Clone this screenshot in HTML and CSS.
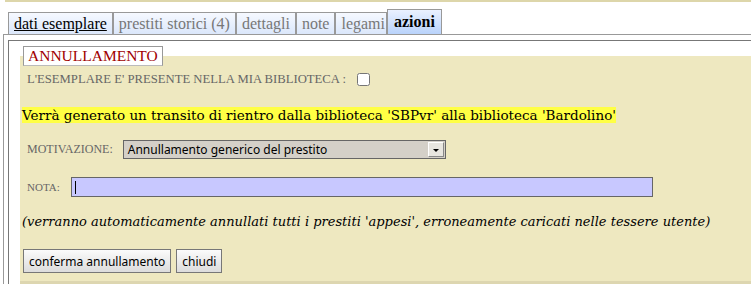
FILE: index.html
```html
<!DOCTYPE html>
<html lang="it">
<head>
  <meta charset="UTF-8">
  <title>Annullamento prestito</title>
  <link rel="stylesheet" href="styles.css">
</head>
<body>

  <div class="topband"></div>

  <ul class="tabs">
    <li class="tab first"><a href="#">dati esemplare</a></li>
    <li class="tab">prestiti storici (4)</li>
    <li class="tab">dettagli</li>
    <li class="tab">note</li>
    <li class="tab last">legami</li>
    <li class="tab active">azioni</li>
  </ul>

  <div class="panel">
    <div class="content">
      <form class="box">
        <fieldset>
          <legend>ANNULLAMENTO</legend>

          <div class="row check-row">
            <label class="lbl" for="presente">L'ESEMPLARE E' PRESENTE NELLA MIA BIBLIOTECA :</label>
            <input type="checkbox" id="presente">
          </div>

          <p class="transit"><span>Verrà generato un transito di rientro dalla biblioteca 'SBPvr' alla biblioteca 'Bardolino'</span></p>

          <div class="row motiv-row">
            <label class="lbl" for="motivazione">MOTIVAZIONE:</label>
            <div class="select">
              <span class="select-text">Annullamento generico del prestito</span>
              <span class="select-arrow"></span>
            </div>
          </div>

          <div class="row nota-row">
            <label class="lbl nota-lbl" for="nota">NOTA:</label>
            <div class="nota" id="nota"><span class="caret"></span></div>
          </div>

          <p class="hint">(verranno automaticamente annullati tutti i prestiti 'appesi', erroneamente caricati nelle tessere utente)</p>

          <div class="buttons">
            <button type="button">conferma annullamento</button>
            <button type="button">chiudi</button>
          </div>
        </fieldset>
      </form>
    </div>
  </div>

</body>
</html>
```

FILE: styles.css
```css
body {
  margin: 0;
  font-family: "DejaVu Serif", serif;
  font-size: 12px;
  color: #000;
  background-color: #ffffff;
  overflow: hidden;
}

.topband {
  height: 2px;
  margin-left: 5px;
  background-color: #ddd6aa;
}

.tabs {
  display: flex;
  align-items: flex-end;
  list-style: none;
  margin: 0;
  padding: 0 0 0 8px;
  height: 32px;
}

.tab {
  height: 21px;
  line-height: 22px;
  padding: 0 5px;
  border: 1px solid #999;
  border-bottom: none;
  background: linear-gradient(#f6f9ff, #dbe7fb);
  color: #777;
  font-family: "Liberation Serif", serif;
  font-size: 16px;
  white-space: nowrap;
}

.tab a {
  color: #000;
}

.tab.last {
  padding-right: 1px;
}

.tab.active {
  height: 24px;
  line-height: 24px;
  padding: 0 6px 0 6px;
  color: #000;
  font-weight: bold;
  background: linear-gradient(#eaf1ff, #b9d3fb);
}

.panel {
  margin-left: 3px;
  border-top: 1px solid #999;
  border-left: 1px solid #999;
  padding: 5px 0 0 4px;
}

.content {
  border-top: 1px solid #777;
  border-left: 1px solid #777;
  padding: 5px 0 0 11px;
}

fieldset {
  margin: 0;
  padding: 0 2px 8px 2px;
  border: none;
  border-bottom: 3px solid #ddd6b0;
  background-color: #eee8c0;
}

legend {
  margin-left: 1px;
  padding: 0 4px;
  height: 18px;
  line-height: 18px;
  border: 1px solid #999;
  border-bottom-color: #bbb;
  background-color: #fff;
  color: #a00000;
  font-family: "Liberation Serif", serif;
  font-size: 15.5px;
}

.row {
  display: flex;
  align-items: center;
}

.lbl {
  padding-left: 5px;
  color: #666;
  font-family: "Liberation Serif", serif;
  font-size: 12px;
}

.check-row {
  margin-top: 5px;
  height: 16px;
}

.check-row .lbl {
  font-size: 12.7px;
}

.check-row input {
  width: 13px;
  height: 13px;
  margin: 0 0 0 11px;
}

.transit {
  margin: 20px 0 0 0;
  font-size: 13.5px;
  line-height: 16px;
}

.transit span {
  background-color: #ffff44;
}

.motiv-row {
  margin-top: 17px;
}

.select {
  display: flex;
  margin-left: 10px;
  width: 321px;
  height: 17px;
  border: 1px solid #666;
  background-color: #d4d0c8;
  font-family: "Noto Sans", sans-serif;
  font-size: 12px;
  line-height: 17px;
}

.select-text {
  flex: 1;
  padding-left: 4px;
}

.select-arrow {
  width: 14px;
  margin: 1px;
  border-left: 1px solid #fff;
  border-top: 1px solid #fff;
  border-right: 1px solid #888;
  border-bottom: 1px solid #888;
  background-color: #e8e6e0;
  position: relative;
}

.select-arrow::after {
  content: "";
  position: absolute;
  left: 4px;
  top: 6px;
  border-left: 3px solid transparent;
  border-right: 3px solid transparent;
  border-top: 3px solid #000;
}

.nota-row {
  margin-top: 18px;
}

.nota-lbl {
  font-size: 11px;
}

.nota {
  margin-left: 11px;
  width: 580px;
  height: 18px;
  border: 1px solid #666;
  background-color: #c8c8ff;
  display: flex;
  align-items: center;
}

.caret {
  margin-left: 3px;
  width: 1px;
  height: 13px;
  background-color: #000;
}

.hint {
  margin: 17px 0 0 0;
  font-size: 13px;
  font-style: italic;
  line-height: 16px;
}

.buttons {
  display: flex;
  gap: 5px;
  margin-top: 19px;
  padding-left: 1px;
}

button {
  height: 24px;
  padding: 0 5px;
  border: 1px solid #777;
  background: linear-gradient(#fbfbfb, #dcdcdc);
  font-family: "Noto Sans", sans-serif;
  font-size: 12px;
  color: #000;
}
```
